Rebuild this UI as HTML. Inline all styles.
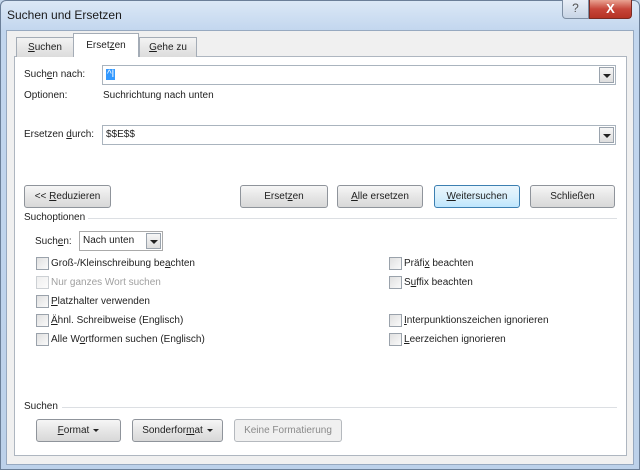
<!DOCTYPE html>
<html><head><meta charset="utf-8"><style>
*{box-sizing:border-box;margin:0;padding:0}
body{width:640px;height:470px;overflow:hidden;background:#c4d7ec;font-family:"Liberation Sans",sans-serif;font-size:10px;color:#1e1e1e;position:relative}
.a{position:absolute}
.frame{left:0;top:0;width:640px;height:470px;background:linear-gradient(#dbe8f6,#c2d6ee 30px,#bcd1ea);border:1px solid #6b7f98;border-radius:6px 6px 0 0}
.client{left:6px;top:30px;width:628px;height:435px;background:#f0f0f0;border:1px solid #97a9c0}
.panel{left:14px;top:56px;width:613px;height:400px;background:#fff;border:1px solid #aeb6c0}
.tab{top:37px;height:20px;background:linear-gradient(#f3f3f3,#dcdcdc);border:1px solid #a4acb6;border-bottom:none;text-align:center;line-height:19px}
.combo{height:20px;border:1px solid #aab4be;background:#fff;line-height:18px;padding-left:3px}
.dd{position:absolute;right:1px;top:1px;width:15px;height:16px;background:linear-gradient(#f6f6f6,#dedede);border:1px solid #9aa3ad}
.dd:after{content:"";position:absolute;left:3px;top:6px;border-left:4px solid transparent;border-right:4px solid transparent;border-top:4px solid #222}
.btn{height:23px;border:1px solid #8f949b;border-radius:3px;background:linear-gradient(#f6f6f6,#e6e6e6 50%,#d8d8d8);text-align:center;line-height:21px}
.cb{width:13px;height:13px;border:1px solid #9aa2ab;background:linear-gradient(135deg,#e0e0e0,#fafafa)}
.lbl{white-space:nowrap}
u{text-decoration:underline}
.line{height:1px;background:#dcdfe3}
.tri{display:inline-block;border-left:3px solid transparent;border-right:3px solid transparent;border-top:3px solid #222;vertical-align:middle;margin-left:4px}
</style></head><body>
<div class="a frame"></div>
<div class="a lbl" style="left:7px;top:8px;font-size:12px;color:#1a1a1a">Suchen und Ersetzen</div>
<div class="a" style="left:562px;top:0;width:27px;height:19px;border:1px solid #7d8ea3;border-top:none;border-radius:0 0 0 4px;background:linear-gradient(#e8eef6,#c8d5e6);text-align:center;font-size:12px;color:#555;line-height:17px">?</div>
<div class="a" style="left:589px;top:0;width:43px;height:19px;border:1px solid #7a2a22;border-top:none;border-radius:0 0 4px 0;background:linear-gradient(#e9a393,#c7463a 50%,#b53324);text-align:center;color:#fff;font-weight:bold;font-size:13px;line-height:17px">X</div>
<div class="a client"></div>
<div class="a panel"></div>
<div class="a tab" style="left:16px;width:58px"><u>S</u>uchen</div>
<div class="a tab" style="left:139px;width:58px"><u>G</u>ehe zu</div>
<div class="a tab" style="left:73px;top:33px;width:66px;height:24px;background:#fff;line-height:24px">Erset<u>z</u>en</div>

<div class="a lbl" style="left:24px;top:69px">Such<u>e</u>n nach:</div>
<div class="a combo" style="left:102px;top:65px;width:514px"><span style="background:#3399ff;color:#fff;padding:0 1px">^l</span><div class="dd"></div></div>
<div class="a lbl" style="left:24px;top:90px">Optionen:</div>
<div class="a lbl" style="left:103px;top:90px">Suchrichtung nach unten</div>
<div class="a lbl" style="left:24px;top:129px">Ersetzen <u>d</u>urch:</div>
<div class="a combo" style="left:102px;top:125px;width:514px">$$E$$<div class="dd"></div></div>

<div class="a btn" style="left:24px;top:185px;width:87px">&lt;&lt; <u>R</u>eduzieren</div>
<div class="a btn" style="left:240px;top:185px;width:88px">Erset<u>z</u>en</div>
<div class="a btn" style="left:337px;top:185px;width:86px"><u>A</u>lle ersetzen</div>
<div class="a btn" style="left:434px;top:185px;width:86px;border-color:#3c7fb1;background:linear-gradient(#eaf6fd,#d9f0fc 50%,#bee6fd)"><u>W</u>eitersuchen</div>
<div class="a btn" style="left:530px;top:185px;width:85px">Schließen</div>

<div class="a lbl" style="left:24px;top:212px">Suchoptionen</div>
<div class="a line" style="left:88px;top:218px;width:529px"></div>
<div class="a lbl" style="left:35px;top:236px">Such<u>e</u>n:</div>
<div class="a combo" style="left:79px;top:231px;width:84px;border-color:#aaa">Nach unten<div class="dd"></div></div>

<div class="a cb" style="left:36px;top:257px"></div><div class="a lbl" style="left:51px;top:258px">Groß-/Kleinschreibung be<u>a</u>chten</div>
<div class="a cb" style="left:36px;top:276px;opacity:.5"></div><div class="a lbl" style="left:51px;top:277px;color:#a0a0a0">Nur ganzes Wort suchen</div>
<div class="a cb" style="left:36px;top:295px"></div><div class="a lbl" style="left:51px;top:296px"><u>P</u>latzhalter verwenden</div>
<div class="a cb" style="left:36px;top:314px"></div><div class="a lbl" style="left:51px;top:315px"><u>Ä</u>hnl. Schreibweise (Englisch)</div>
<div class="a cb" style="left:36px;top:333px"></div><div class="a lbl" style="left:51px;top:334px">Alle W<u>o</u>rtformen suchen (Englisch)</div>

<div class="a cb" style="left:389px;top:257px"></div><div class="a lbl" style="left:404px;top:258px">Präfi<u>x</u> beachten</div>
<div class="a cb" style="left:389px;top:276px"></div><div class="a lbl" style="left:404px;top:277px">S<u>u</u>ffix beachten</div>
<div class="a cb" style="left:389px;top:314px"></div><div class="a lbl" style="left:404px;top:315px"><u>I</u>nterpunktionszeichen ignorieren</div>
<div class="a cb" style="left:389px;top:333px"></div><div class="a lbl" style="left:404px;top:334px"><u>L</u>eerzeichen ignorieren</div>

<div class="a lbl" style="left:24px;top:401px">Suchen</div>
<div class="a line" style="left:62px;top:407px;width:555px"></div>
<div class="a btn" style="left:36px;top:419px;width:85px"><u>F</u>ormat<span class="tri"></span></div>
<div class="a btn" style="left:132px;top:419px;width:91px">Sonderfor<u>m</u>at<span class="tri"></span></div>
<div class="a btn" style="left:234px;top:419px;width:108px;color:#8a8a8a;border-color:#b5b9be;background:#f0f0f0">Keine Formatierung</div>
</body></html>
